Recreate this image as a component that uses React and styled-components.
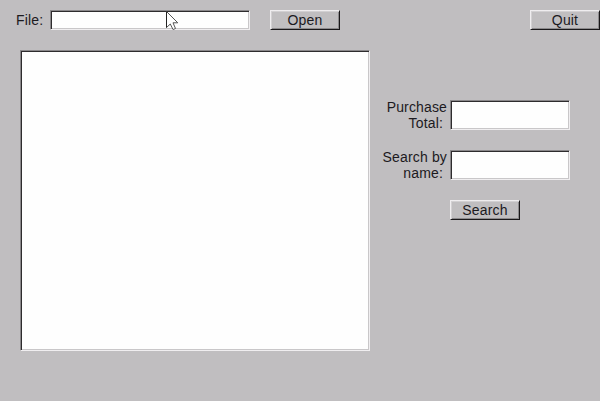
import React from "react";
import styled, { createGlobalStyle } from "styled-components";

const GlobalStyle = createGlobalStyle`
  * { box-sizing: border-box; }
  body { margin: 0; background: #c0bec0; overflow: hidden; }
`;

const Window = styled.main`
  position: relative;
  display: flex;
  flex-direction: column;
  gap: 20px;
  width: 600px;
  height: 401px;
  padding-top: 10px;
  background: #c0bec0;
  color: #1c1a1e;
  font: 14px/16px "Liberation Sans", Arial, sans-serif;
  letter-spacing: 0.15px;
`;

const Toolbar = styled.header`
  display: flex;
  align-items: center;
  height: 20px;
`;

const FileLabel = styled.label`
  width: 50px;
  padding-left: 16px;
  white-space: pre;
`;

const Content = styled.div`
  display: flex;
  align-items: flex-start;
  padding-left: 20px;
`;

const sunken = `
  border: 1px solid;
  border-color: #8a888a #f0eef0 #f0eef0 #8a888a;
  box-shadow: inset 1px 1px #2e2c2e, inset -1px -1px #c9c7c9;
  background: #fefefe;
`;

const TextInput = styled.input`
  ${sunken}
  width: ${({ $width }) => $width}px;
  height: ${({ $height }) => $height}px;
  padding: 0 4px;
  border-radius: 0;
  outline: none;
  font: inherit;
`;

const ResultList = styled.section`
  ${sunken}
  width: 350px;
  height: 301px;
`;

const Button = styled.button`
  width: 70px;
  height: 20px;
  padding: 0;
  border: 1px solid;
  border-color: #efedef #1a181a #1a181a #efedef;
  border-radius: 0;
  box-shadow: inset 1px 1px #d2d0d2, inset -1px -1px #8c8a8c;
  background: #c0bec0;
  color: inherit;
  font: inherit;
  letter-spacing: inherit;
  line-height: 18px;
`;

const OpenButton = styled(Button)`
  margin-left: 20px;
`;

const QuitButton = styled(Button)`
  margin-left: auto;
`;

const SidePanel = styled.aside`
  display: grid;
  grid-template-columns: 80px 120px;
  row-gap: 20px;
  padding-top: 50px;
`;

const FieldLabel = styled.label`
  height: 30px;
  margin-top: -1px;
  padding-right: 3px;
  text-align: right;
  white-space: pre;
`;

const SearchButton = styled(Button)`
  grid-column: 2;
`;

const Pointer = styled.svg`
  position: absolute;
  left: 166px;
  top: 11px;
  pointer-events: none;
`;

export default function App() {
  return (
    <>
      <GlobalStyle />
      <Window>
        <Toolbar>
          <FileLabel htmlFor="file">File:</FileLabel>
          <TextInput id="file" $width={200} $height={20} />
          <OpenButton>Open</OpenButton>
          <QuitButton>Quit</QuitButton>
        </Toolbar>
        <Content>
          <ResultList />
          <SidePanel>
            <FieldLabel htmlFor="total">{"Purchase\nTotal: "}</FieldLabel>
            <TextInput id="total" $width={120} $height={30} />
            <FieldLabel htmlFor="name">{"Search by\nname: "}</FieldLabel>
            <TextInput id="name" $width={120} $height={30} />
            <SearchButton>Search</SearchButton>
          </SidePanel>
        </Content>
        <Pointer width="13" height="20" viewBox="0 0 13 20" aria-hidden="true">
          <path
            d="M.5 .5V16.5L4.3 13L7 18.5L9.5 17.5L7 11.8H11.8Z"
            fill="#fff"
            stroke="#555"
          />
          <path d="M.5 .5V16.5" stroke="#222" />
        </Pointer>
      </Window>
    </>
  );
}
